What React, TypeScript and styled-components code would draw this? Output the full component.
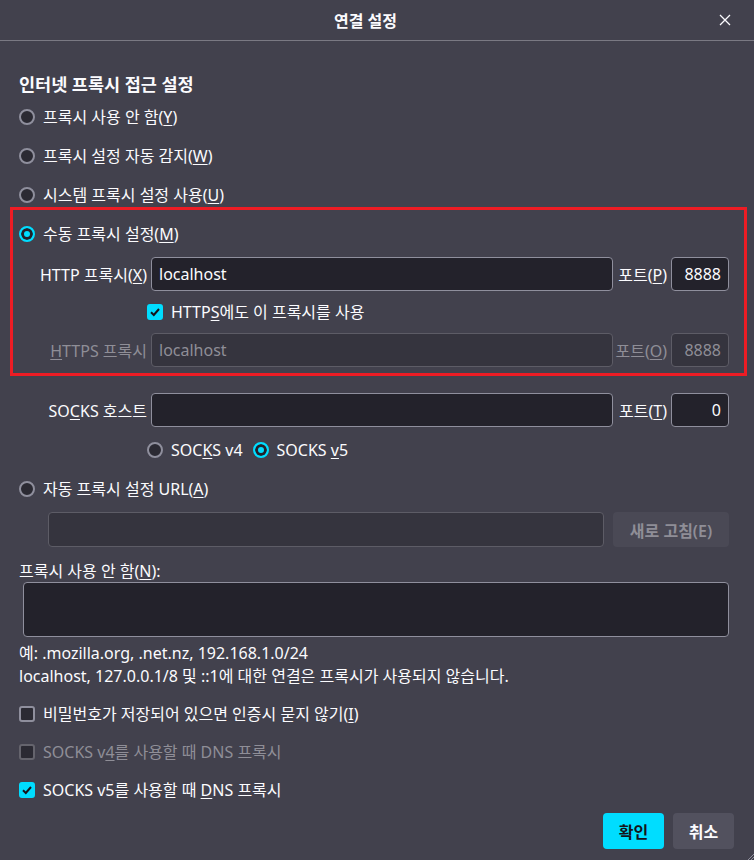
import React from 'react';
import styled, { createGlobalStyle, css } from 'styled-components';

const GlobalStyle = createGlobalStyle`
  html, body {
    margin: 0;
    padding: 0;
    background: #42414d;
  }
  body {
    font-family: "Noto Sans", "Noto Sans CJK KR", sans-serif;
    color: #fbfbfe;
    font-size: 16px;
  }
  u {
    text-underline-offset: 2px;
    text-decoration-thickness: 1px;
  }
`;

const Dialog = styled.div`
  position: relative;
  width: 754px;
  height: 860px;
  overflow: hidden;
  background: #42414d;
`;

const Header = styled.div`
  display: grid;
  grid-template-columns: 1fr auto 1fr;
  align-items: center;
  height: 40px;
  padding: 0 23px 0 0;
  border-bottom: 1px solid #7a7983;
`;

const Title = styled.div`
  grid-column: 2;
  font-size: 16px;
  font-weight: 600;
`;

const CloseButton = styled.button`
  justify-self: end;
  display: flex;
  padding: 0;
  border: 0;
  background: transparent;
  color: #fbfbfe;
  cursor: pointer;
`;

const Content = styled.div`
  padding: 0 25px 0 19px;
`;

const Heading = styled.h2`
  margin: 31px 0 0;
  height: 24px;
  line-height: 24px;
  font-size: 17.5px;
  font-weight: 600;
`;

const Row = styled.div<{ $top?: number; $indent?: number; $height?: number; $gap?: number }>`
  display: flex;
  align-items: center;
  gap: ${(p) => p.$gap ?? 8}px;
  height: ${(p) => p.$height ?? 24}px;
  margin-top: ${(p) => p.$top ?? 0}px;
  margin-left: ${(p) => p.$indent ?? 0}px;
  line-height: 20px;
  white-space: nowrap;
`;

const Label = styled.span<{ $disabled?: boolean }>`
  color: ${(p) => (p.$disabled ? '#8f8e97' : '#fbfbfe')};
`;

const RadioMark = styled.span<{ $checked?: boolean }>`
  box-sizing: border-box;
  flex: none;
  width: 16px;
  height: 16px;
  border-radius: 50%;
  border: 2px solid #8f8f9d;
  background: #2b2a33;
  ${(p) =>
    p.$checked &&
    css`
      border-color: #00ddff;
      background: #00ddff;
      box-shadow: inset 0 0 0 3px #23222b;
    `}
`;

const CheckMark = styled.span<{ $checked?: boolean; $disabled?: boolean }>`
  box-sizing: border-box;
  flex: none;
  display: flex;
  align-items: center;
  justify-content: center;
  width: 16px;
  height: 16px;
  border-radius: 3px;
  border: 2px solid ${(p) => (p.$disabled ? '#65646d' : '#8f8f9d')};
  background: #2b2a33;
  ${(p) =>
    p.$checked &&
    css`
      border-color: #00ddff;
      background: #00ddff;
    `}
`;

const Highlight = styled.div`
  margin: 0 -18px 0 -9px;
  padding: 12px 15px 6px 6px;
  border: 3px solid #ed1c24;
`;

const ProxyRow = styled.div<{ $top?: number }>`
  display: grid;
  grid-template-columns: 128px 1fr 50px 58px;
  column-gap: 4px;
  align-items: center;
  margin-top: ${(p) => p.$top ?? 0}px;
  white-space: nowrap;
`;

const FieldLabel = styled.span<{ $disabled?: boolean }>`
  justify-self: end;
  color: ${(p) => (p.$disabled ? '#8f8e97' : '#fbfbfe')};
`;

const Field = styled.div<{ $disabled?: boolean; $align?: string; $height?: number }>`
  box-sizing: border-box;
  display: flex;
  align-items: center;
  justify-content: ${(p) => (p.$align === 'right' ? 'flex-end' : 'flex-start')};
  height: ${(p) => p.$height ?? 34}px;
  padding: 0 7px;
  border-radius: 4px;
  border: 1px solid ${(p) => (p.$disabled ? '#5d5c66' : '#8f8f9d')};
  background: ${(p) => (p.$disabled ? '#35343e' : '#23222b')};
  color: ${(p) => (p.$disabled ? '#8f8e97' : '#fbfbfe')};
`;

const UrlRow = styled.div`
  display: flex;
  gap: 9px;
  margin: 11px 0 0 29px;
`;

const UrlField = styled(Field)`
  flex: 1;
`;

const RefreshButton = styled.button`
  width: 116px;
  height: 35px;
  border: 0;
  border-radius: 4px;
  background: #4a4955;
  color: #8f8e97;
  font: inherit;
  font-weight: 600;
`;

const TextArea = styled.div`
  box-sizing: border-box;
  height: 55px;
  margin: 1px 0 0 4px;
  border-radius: 4px;
  border: 1px solid #8f8f9d;
  background: #23222b;
`;

const Note = styled.div<{ $top?: number }>`
  height: 20px;
  line-height: 20px;
  margin-top: ${(p) => p.$top ?? 0}px;
  white-space: nowrap;
`;

const Footer = styled.div`
  display: flex;
  justify-content: flex-end;
  gap: 9px;
  margin: 11px -5px 0 0;
`;

const Button = styled.button<{ $primary?: boolean }>`
  height: 36px;
  min-width: 61px;
  padding: 0 12px;
  border: 0;
  border-radius: 4px;
  font: inherit;
  font-weight: 600;
  background: ${(p) => (p.$primary ? '#00ddff' : '#52515e')};
  color: ${(p) => (p.$primary ? '#15141a' : '#fbfbfe')};
`;

const Grip = styled.svg`
  position: absolute;
  right: 0;
  bottom: 0;
`;

const Radio = ({ checked, children, ...rest }: { checked?: boolean; children: React.ReactNode; $top?: number; $indent?: number }) => (
  <Row {...rest}>
    <RadioMark $checked={checked} />
    <Label>{children}</Label>
  </Row>
);

const Check = ({
  checked,
  disabled,
  children,
  ...rest
}: {
  checked?: boolean;
  disabled?: boolean;
  children: React.ReactNode;
  $top?: number;
  $indent?: number;
  $height?: number;
}) => (
  <Row {...rest}>
    <CheckMark $checked={checked} $disabled={disabled}>
      {checked && (
        <svg width="12" height="12" viewBox="0 0 12 12">
          <path d="M2 6.3 L4.8 9 L10 3" fill="none" stroke="#15141a" strokeWidth="2" />
        </svg>
      )}
    </CheckMark>
    <Label $disabled={disabled}>{children}</Label>
  </Row>
);

export default function App() {
  return (
    <>
      <GlobalStyle />
      <Dialog>
        <Header>
          <Title>연결 설정</Title>
          <CloseButton aria-label="닫기">
            <svg width="12" height="12" viewBox="0 0 12 12">
              <path d="M1 1 L11 11 M11 1 L1 11" stroke="#fbfbfe" strokeWidth="1.3" />
            </svg>
          </CloseButton>
        </Header>
        <Content>
          <Heading>인터넷 프록시 접근 설정</Heading>
          <Radio $top={9}>
            프록시 사용 안 함(<u>Y</u>)
          </Radio>
          <Radio $top={15}>
            프록시 설정 자동 감지(<u>W</u>)
          </Radio>
          <Radio $top={15}>
            시스템 프록시 설정 사용(<u>U</u>)
          </Radio>
          <Highlight>
            <Radio checked>
              수동 프록시 설정(<u>M</u>)
            </Radio>
            <ProxyRow $top={11}>
              <FieldLabel>
                HTTP 프록시(<u>X</u>)
              </FieldLabel>
              <Field>localhost</Field>
              <FieldLabel>
                포트(<u>P</u>)
              </FieldLabel>
              <Field $align="right">8888</Field>
            </ProxyRow>
            <Check checked $indent={128} $height={42}>
              HTTP<u>S</u>에도 이 프록시를 사용
            </Check>
            <ProxyRow>
              <FieldLabel $disabled>
                <u>H</u>TTPS 프록시
              </FieldLabel>
              <Field $disabled>localhost</Field>
              <FieldLabel $disabled>
                포트(<u>O</u>)
              </FieldLabel>
              <Field $disabled $align="right">
                8888
              </Field>
            </ProxyRow>
          </Highlight>
          <ProxyRow $top={17}>
            <FieldLabel>
              SO<u>C</u>KS 호스트
            </FieldLabel>
            <Field />
            <FieldLabel>
              포트(<u>T</u>)
            </FieldLabel>
            <Field $align="right">0</Field>
          </ProxyRow>
          <Row $top={11} $indent={128} $gap={10}>
            <Row>
              <RadioMark />
              <Label>
                SOC<u>K</u>S v4
              </Label>
            </Row>
            <Row>
              <RadioMark $checked />
              <Label>
                SOCKS <u>v</u>5
              </Label>
            </Row>
          </Row>
          <Radio $top={15}>
            자동 프록시 설정 URL(<u>A</u>)
          </Radio>
          <UrlRow>
            <UrlField $disabled $height={35} />
            <RefreshButton disabled>새로 고침(E)</RefreshButton>
          </UrlRow>
          <Note $top={14}>
            프록시 사용 안 함(<u>N</u>):
          </Note>
          <TextArea />
          <Note $top={6}>예: .mozilla.org, .net.nz, 192.168.1.0/24</Note>
          <Note $top={3}>localhost, 127.0.0.1/8 및 ::1에 대한 연결은 프록시가 사용되지 않습니다.</Note>
          <Check $top={16}>
            비밀번호가 저장되어 있으면 인증시 묻지 않기(<u>I</u>)
          </Check>
          <Check disabled $top={14}>
            SOCKS v<u>4</u>를 사용할 때 DNS 프록시
          </Check>
          <Check checked $top={14}>
            SOCKS v5를 사용할 때 <u>D</u>NS 프록시
          </Check>
          <Footer>
            <Button $primary>확인</Button>
            <Button>취소</Button>
          </Footer>
        </Content>
        <Grip width="8" height="8" viewBox="0 0 8 8">
          <path d="M8 2 L2 8 M8 5 L5 8" stroke="#8f8f9d" strokeWidth="1" />
        </Grip>
      </Dialog>
    </>
  );
}
